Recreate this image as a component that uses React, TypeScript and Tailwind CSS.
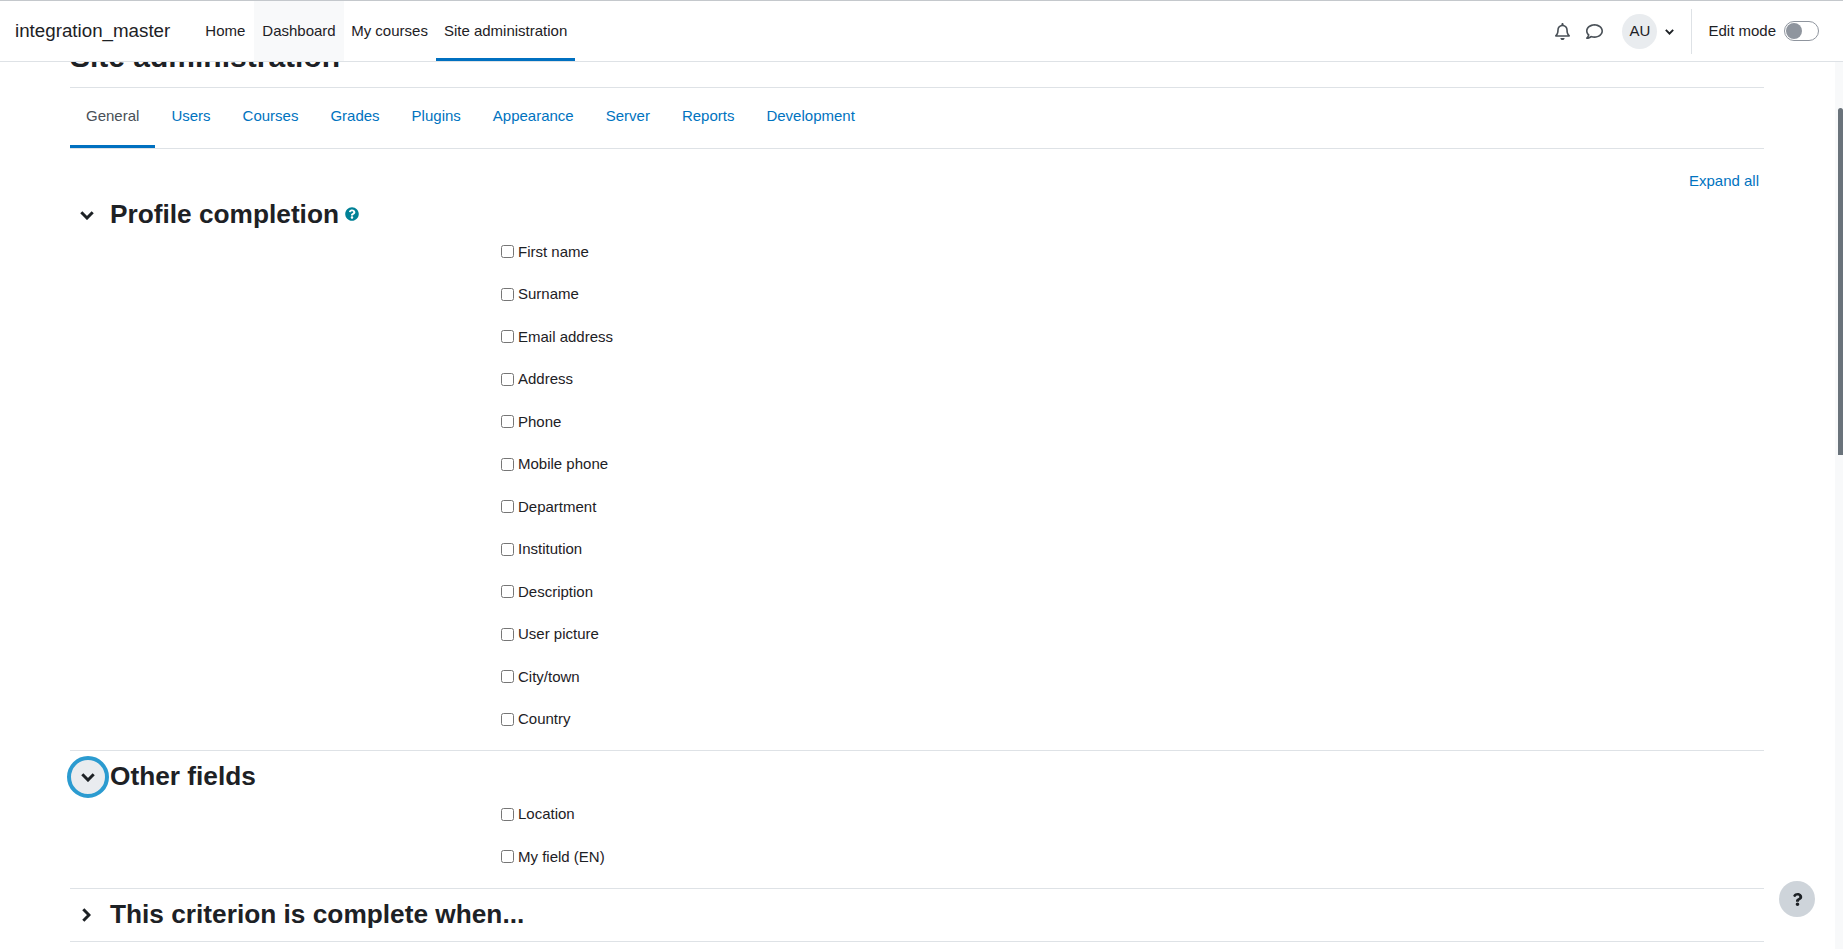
import React from 'react';
import { FaQuestion, FaQuestionCircle, FaRegBell, FaRegComment } from 'react-icons/fa';

const nav = [
  { label: 'Home', cls: 'px-[7.5px] mr-[1.5px]' },
  { label: 'Dashboard', cls: 'bg-[#f8f9fa] px-[8px]' },
  { label: 'My courses', cls: 'px-[7.5px]' },
  { label: 'Site administration', cls: 'ml-[0.5px] px-[8px] border-b-[3px] border-[#0070c0] pt-[3px]' },
];
const tabs = ['Users', 'Courses', 'Grades', 'Plugins', 'Appearance', 'Server', 'Reports', 'Development'];
const profile = ['First name', 'Surname', 'Email address', 'Address', 'Phone', 'Mobile phone', 'Department', 'Institution', 'Description', 'User picture', 'City/town', 'Country'];
const other = ['Location', 'My field (EN)'];

function Row({ label }: { label: string }) {
  return (
    <label className="flex h-[42.5px] items-center pl-[431px]">
      <input type="checkbox" className="m-0 h-[13px] w-[13px] shrink-0" />
      <span className="ml-[4px]">{label}</span>
    </label>
  );
}

function Down({ className }: { className: string }) {
  return (
    <svg viewBox="0 0 14 9" className={className} fill="none" stroke="currentColor" strokeWidth="3">
      <polyline points="1.3,1.3 7,7 12.7,1.3" />
    </svg>
  );
}

function Right({ className }: { className: string }) {
  return (
    <svg viewBox="0 0 9 14" className={className} fill="none" stroke="currentColor" strokeWidth="3">
      <polyline points="1.3,1.3 7,7 1.3,12.7" />
    </svg>
  );
}

export default function App() {
  return (
    <div className="relative flex h-[949px] w-[1843px] overflow-hidden bg-white text-[15px] leading-[22.5px] text-[#1d2125] [font-family:'Liberation_Sans',Arial,sans-serif]">
      <header className="absolute left-0 top-0 z-10 flex h-[62px] w-full border-b border-t border-b-[#dee2e6] border-t-[#c4c8cc] bg-white">
        <div className="ml-[15px] flex h-full items-center text-[18.75px]">integration_master</div>
        <nav className="ml-[27.5px] flex h-full">
          {nav.map((n) => (
            <div key={n.label} className={`flex h-full items-center whitespace-nowrap ${n.cls}`}>{n.label}</div>
          ))}
        </nav>
        <div className="ml-auto flex h-full items-center pr-[24px]">
          <FaRegBell className="h-[17px] w-[17px] text-[#495057]" />
          <FaRegComment className="ml-[15px] h-[17px] w-[17px] text-[#495057]" />
          <div className="ml-[19.5px] flex h-[35px] w-[35px] items-center justify-center rounded-full bg-[#e9ecef] text-[15px]">AU</div>
          <Down className="ml-[8px] mt-[2px] h-[6px] w-[9px] text-[#1d2125]" />
          <div className="ml-[17px] h-[45px] w-px bg-[#dee2e6]" />
          <span className="ml-[16px]">Edit mode</span>
          <div className="ml-[8px] flex h-[20px] w-[35px] items-center rounded-full border border-[#8f959e] pl-px">
            <div className="h-[16px] w-[16px] rounded-full bg-[#8f959e]" />
          </div>
        </div>
      </header>

      <main className="min-w-0 flex-1 pl-[70px] pr-[71px] pt-[36px]">
        <h1 className="h-[51px] pt-[3px] text-[30px] font-bold leading-[36px] text-[#1d2125]">Site administration</h1>
        <div className="flex h-[62px] border-b border-t border-[#dee2e6] text-[#0073c0]">
          <div className="flex h-full items-center border-b-[3px] border-[#0070c0] px-[16px] pb-[1px] text-[#495057]">General</div>
          {tabs.map((t) => (
            <div key={t} className="flex h-full items-center px-[16px] pb-[4px]">{t}</div>
          ))}
        </div>
        <div className="flex justify-end pr-[5px] pt-[20.5px] text-[#0073c0]">Expand all</div>

        <section className="mt-[6px] border-b border-[#dee2e6] pb-[9.5px]">
          <div className="flex h-[32.5px] items-center">
            <div className="flex w-[40px] justify-center pr-[7px] pt-[3px]"><Down className="h-[9px] w-[14px]" /></div>
            <h3 className="text-[26.25px] font-bold">Profile completion</h3>
            <FaQuestionCircle className="ml-[6px] h-[14px] w-[14px] text-[#008196]" />
          </div>
          {profile.map((p) => <Row key={p} label={p} />)}
        </section>

        <section className="border-b border-[#dee2e6] pb-[9.5px] pt-[9px]">
          <div className="flex h-[33px] items-center">
            <div className="-ml-[3px] mr-[1px] mt-[1px] flex h-[42px] w-[42px] shrink-0 items-center justify-center rounded-full border-[4px] border-[#2b9bd0] bg-[#e9ecef] pt-[1px]">
              <Down className="h-[9px] w-[14px]" />
            </div>
            <h3 className="text-[26.25px] font-bold">Other fields</h3>
          </div>
          {other.map((p) => <Row key={p} label={p} />)}
        </section>

        <section className="border-b border-[#dee2e6]">
          <div className="flex h-[52px] items-center">
            <div className="flex w-[40px] justify-center pr-[7px]"><Right className="h-[14px] w-[9px]" /></div>
            <h3 className="text-[26.25px] font-bold">This criterion is complete when...</h3>
          </div>
        </section>
      </main>

      <div className="relative mt-[62px] w-[8px] shrink-0 bg-[#f8f9fa]">
        <div className="absolute right-0 top-[46px] h-[347px] w-[5px] rounded-t-[3px] bg-[#6a737b]" />
      </div>

      <div className="absolute left-[1779px] top-[881px] flex h-[36px] w-[36px] items-center justify-center rounded-full bg-[#ced4da]">
        <FaQuestion className="h-[13px] w-[13px] text-[#1d2125]" />
      </div>
    </div>
  );
}
